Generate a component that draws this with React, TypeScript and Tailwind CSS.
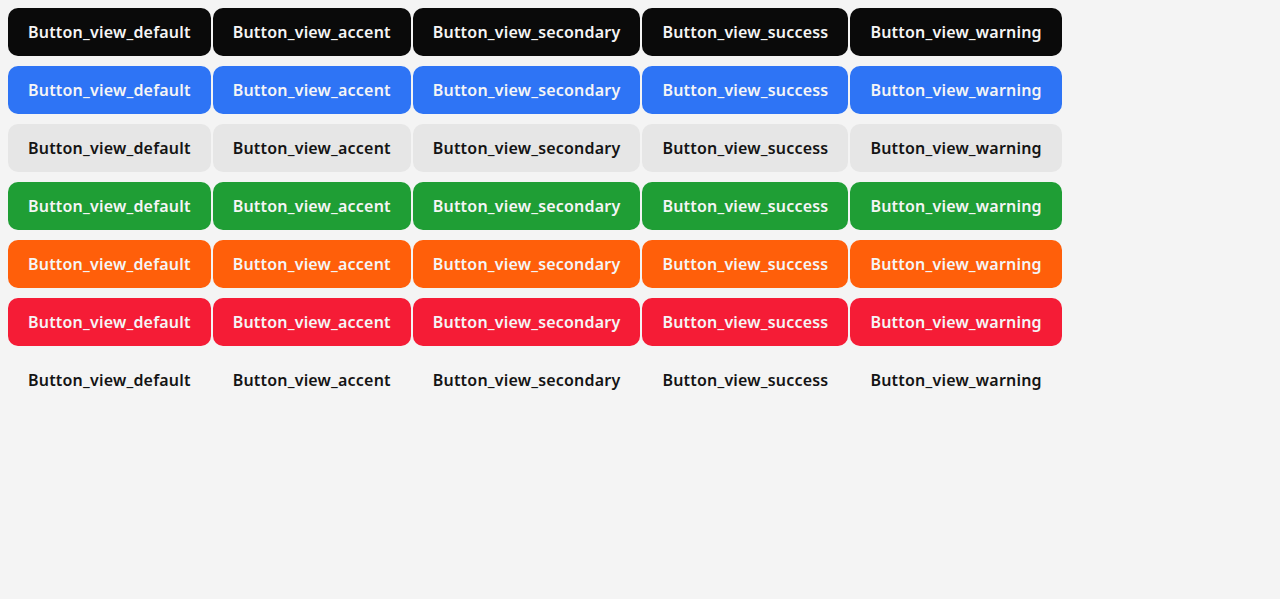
const views = ["default", "accent", "secondary", "success", "warning"];

const themes = [
  "bg-[#0a0a0a] text-[#f5f5f5]",
  "bg-[#2e74f5] text-[#f5f5f5]",
  "bg-[#e6e6e6] text-[#141414]",
  "bg-[#1f9e35] text-[#f5f5f5]",
  "bg-[#ff5f0a] text-[#f5f5f5]",
  "bg-[#f51c36] text-[#f5f5f5]",
  "bg-transparent text-[#141414]",
];

export default function App() {
  return (
    <div className="min-h-screen bg-[#f4f4f4] p-2 font-['Noto_Sans',sans-serif]">
      <div className="flex flex-col gap-[10px]">
        {themes.map((theme, i) => (
          <div key={i} className="flex gap-[2px]">
            {views.map((v) => (
              <button
                key={v}
                className={`h-12 rounded-[10px] px-5 text-base font-semibold tracking-[0.2px] whitespace-nowrap ${theme}`}
              >
                Button_view_{v}
              </button>
            ))}
          </div>
        ))}
      </div>
    </div>
  );
}
